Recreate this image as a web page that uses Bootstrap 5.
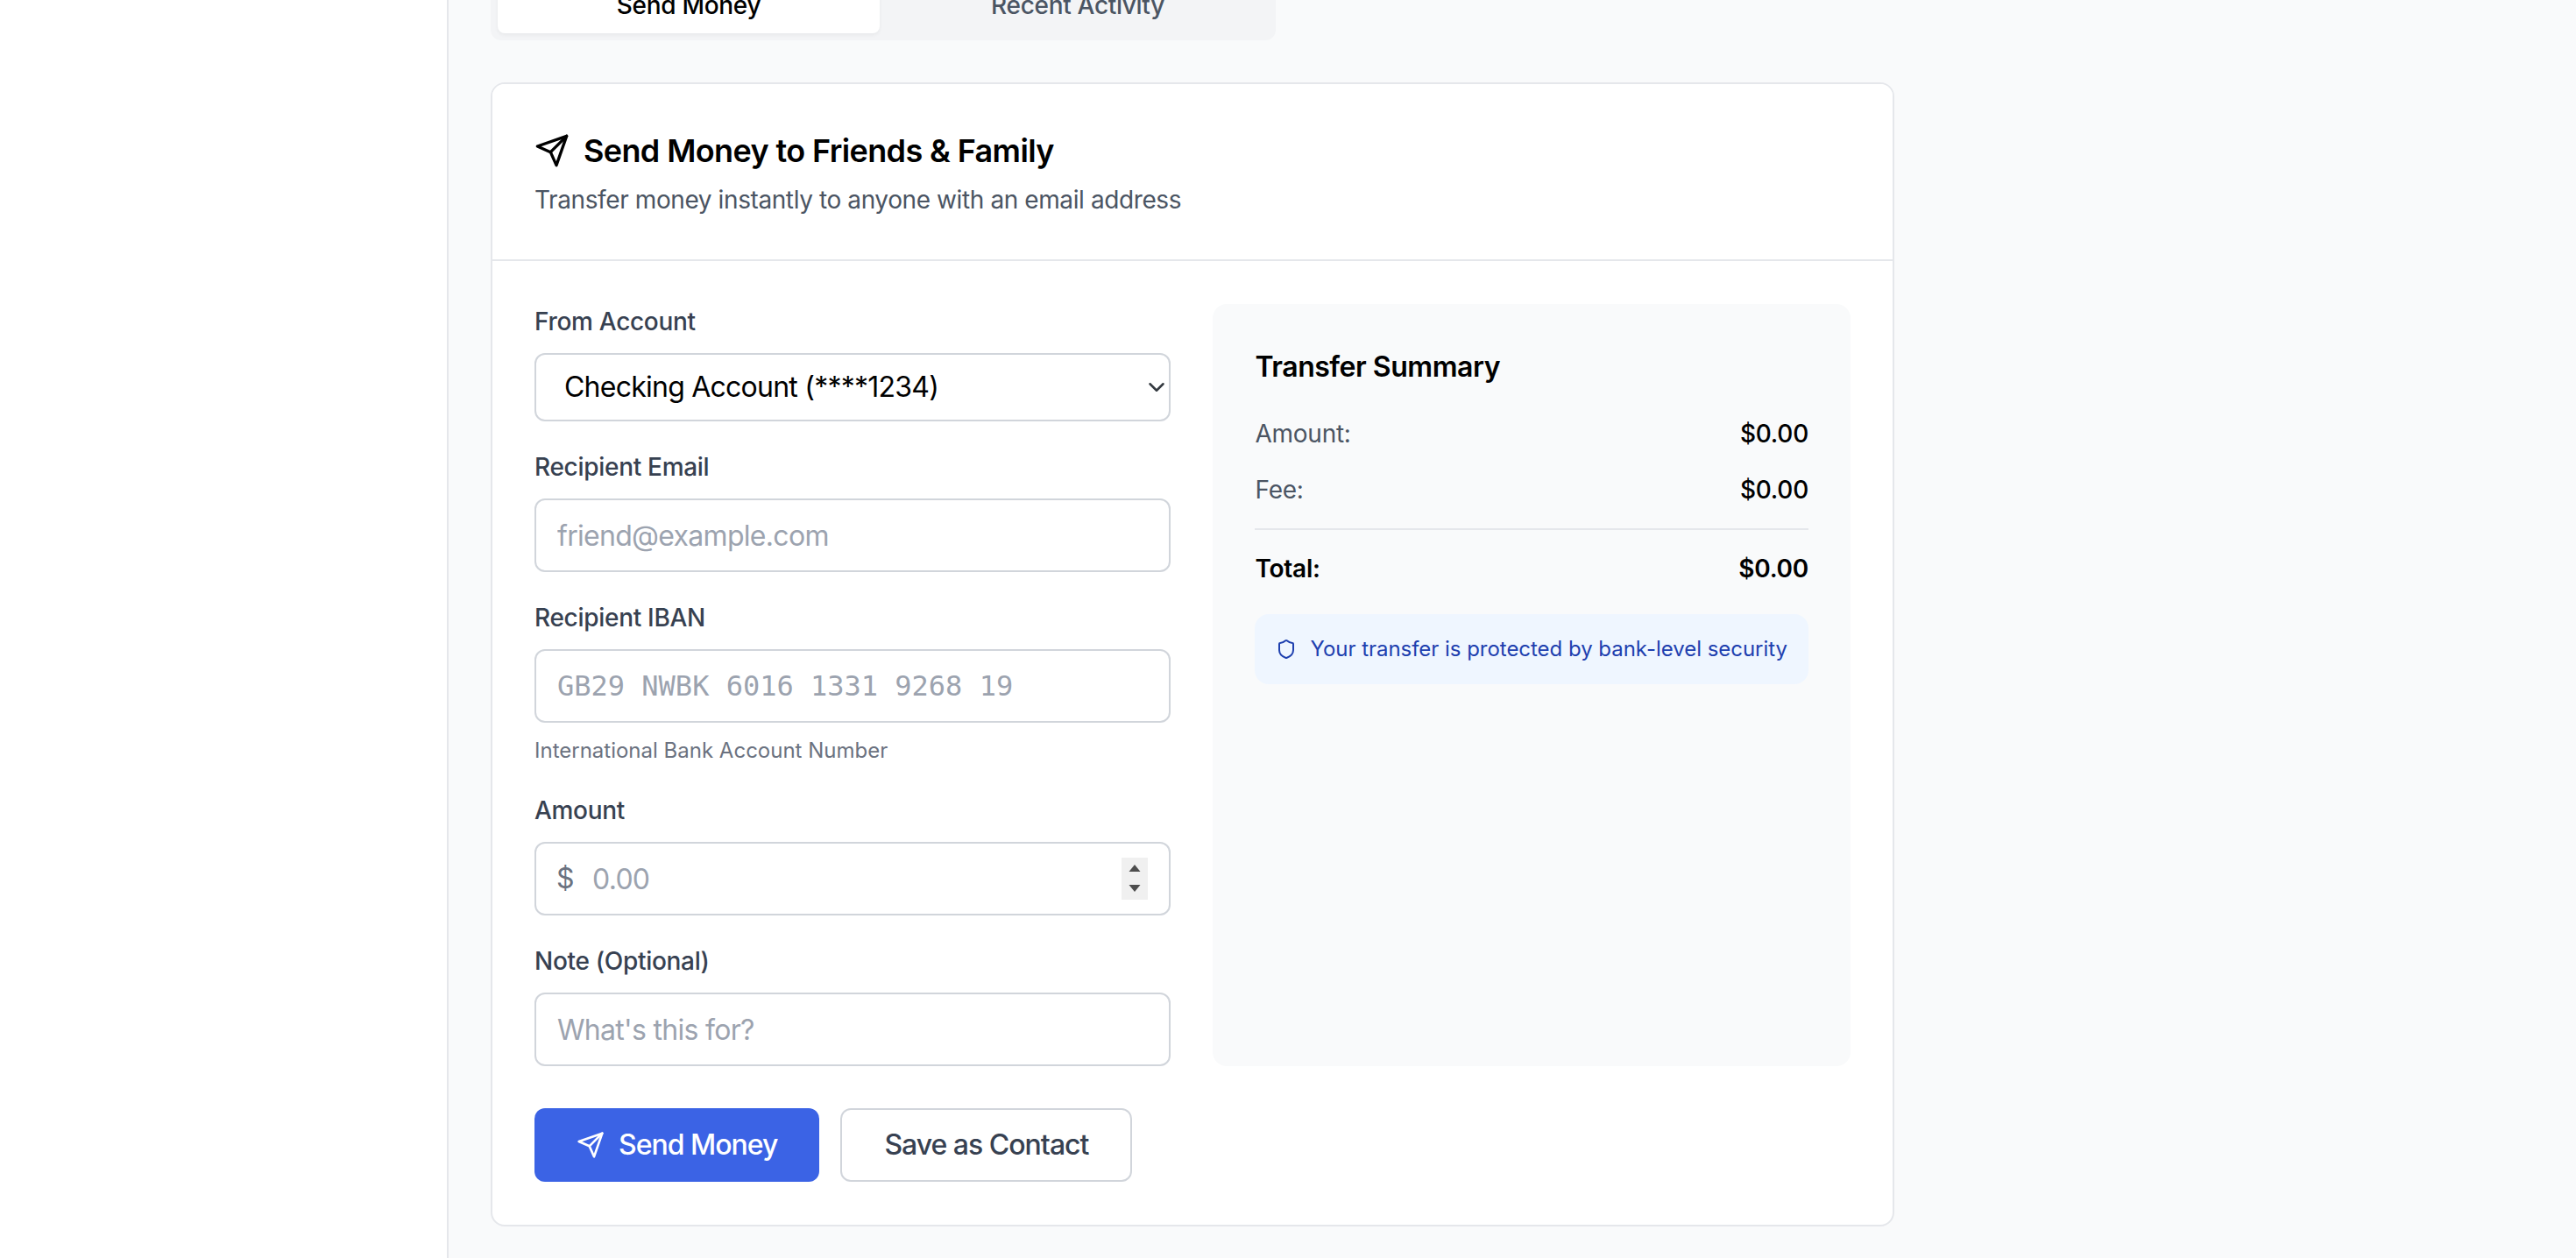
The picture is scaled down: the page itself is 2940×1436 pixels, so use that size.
<!DOCTYPE html>
<html lang="en">
<head>
    <meta charset="UTF-8">
    <meta name="viewport" content="width=device-width, initial-scale=1.0">
    <title>Send Money</title>
    <link href="https://cdn.jsdelivr.net/npm/bootstrap@5.3.0/dist/css/bootstrap.min.css" rel="stylesheet">
    <style>
        html, body { height: 100%; }
        body { background: #f9fafb; font-family: Inter, "Noto Sans", sans-serif; overflow: hidden; color: #000; }
        .side-rail { width: 512px; flex: none; background: #fff; border-right: 2px solid #e5e7eb; min-height: 100vh; }
        .main-pane { padding: 0 48px; flex: 1; }

        .tab-strip { width: 896px; height: 80px; margin-top: -34px; padding: 8px; background: #f3f4f6; border-radius: 12px; flex-wrap: nowrap; }
        .tab-strip .nav-link { height: 64px; padding: 0; font-size: 28px; font-weight: 500; letter-spacing: -.3px; color: #4b5563; border-radius: 8px; line-height: 64px; }
        .tab-strip .nav-item:first-child { margin-right: 8px; }
        .tab-strip .nav-link.active { background: #fff; color: #000; box-shadow: 0 2px 4px rgba(0,0,0,.05); }

        .send-card { width: 1602px; margin-top: 48px; border: 2px solid #e5e7eb; border-radius: 16px; background: #fff; }
        .send-card .card-header { padding: 48px; height: 202px; background: #fff; border-bottom: 2px solid #e5e7eb; border-radius: 14px 14px 0 0; }
        .send-card .card-body { padding: 49px 48px 49px; }
        .card-heading { font-size: 36px; line-height: 56px; font-weight: 600; letter-spacing: -.62px; margin: 0 0 8px; gap: 16px; }
        .card-sub { font-size: 28px; line-height: 40px; letter-spacing: -.4px; color: #4b5563; margin: 0; }

        .form-cols { display: grid; grid-template-columns: 1fr 1fr; column-gap: 48px; }
        .field-label { display: block; font-size: 28px; line-height: 40px; font-weight: 500; letter-spacing: -.3px; color: #374151; margin-bottom: 16px; }
        .field-wrap { margin-bottom: 32px; }
        .field-wrap.last-field { margin-bottom: 0; }
        .form-control.pay-input { height: 84px; padding: 0 24px; font-size: 32px; letter-spacing: -.7px; border: 2px solid #d1d5db; border-radius: 12px; color: #000; }
        .pay-input::placeholder { color: #9ca3af; opacity: 1; }
        .form-control.iban-input { font-family: "DejaVu Sans Mono", monospace; letter-spacing: 0; }
        .form-control.amount-input { padding-left: 64px; }
        .form-select.pay-select { height: 78px; padding: 0 24px 0 32px; font-size: 32px; letter-spacing: -.76px; border: 2px solid #d1d5db; border-radius: 12px; color: #000; background-size: 20px 20px; background-position: right 4px center; }
        .help-line { font-size: 24px; line-height: 32px; color: #6b7280; margin-top: 16px; }
        .dollar-mark { position: absolute; left: 25px; top: 0; line-height: 84px; font-size: 32px; color: #6b7280; }
        .spin-box { position: absolute; right: 26px; top: 18px; width: 30px; height: 48px; background: #f0f0f0; }

        .summary-panel { background: #f9fafb; border-radius: 16px; padding: 48px; }
        .summary-title { font-size: 32px; line-height: 48px; font-weight: 600; letter-spacing: -.47px; margin-bottom: 32px; }
        .sum-row { font-size: 28px; line-height: 40px; letter-spacing: -.25px; margin-bottom: 24px; color: #4b5563; }
        .sum-row b { font-weight: 500; color: #000; }
        .sum-total { border-top: 2px solid #e5e7eb; padding-top: 24px; margin-bottom: 32px; font-weight: 600; color: #000; }
        .sum-total b { font-weight: 600; }
        .secure-note { background: #eff6ff; color: #1e40af; border-radius: 16px; padding: 24px; font-size: 24px; line-height: 32px; letter-spacing: -.03px; gap: 15px; white-space: nowrap; }

        .action-row { margin-top: 48px; gap: 24px; }
        .btn.act-btn { height: 84px; padding: 0 48px; font-size: 32px; font-weight: 500; letter-spacing: -1px; border-radius: 12px; display: inline-flex; align-items: center; gap: 16px; }
        .btn.btn-primary.act-btn { background: #3b63e5; border: 0; color: #fff; }
        .btn.btn-outline-secondary.act-btn { background: #fff; border: 2px solid #d1d5db; color: #374151; }
    </style>
</head>
<body>
    <div class="d-flex">
        <aside class="side-rail"></aside>
        <main class="main-pane">
            <ul class="nav nav-pills nav-justified tab-strip">
                <li class="nav-item"><a class="nav-link active" href="#">Send Money</a></li>
                <li class="nav-item"><a class="nav-link" href="#">Recent Activity</a></li>
            </ul>

            <div class="card send-card">
                <div class="card-header">
                    <h2 class="card-heading d-flex align-items-center">
                        <svg width="40" height="40" viewBox="0 0 24 24" fill="none" stroke="#000" stroke-width="2" stroke-linecap="round" stroke-linejoin="round"><line x1="22" y1="2" x2="11" y2="13"/><polygon points="22 2 15 22 11 13 2 9 22 2"/></svg>
                        Send Money to Friends &amp; Family
                    </h2>
                    <p class="card-sub">Transfer money instantly to anyone with an email address</p>
                </div>
                <div class="card-body">
                    <div class="form-cols">
                        <form>
                            <div class="field-wrap">
                                <label class="field-label">From Account</label>
                                <select class="form-select pay-select">
                                    <option>Checking Account (****1234)</option>
                                    <option>Savings Account (****5678)</option>
                                </select>
                            </div>
                            <div class="field-wrap">
                                <label class="field-label">Recipient Email</label>
                                <input type="email" class="form-control pay-input" placeholder="friend@example.com">
                            </div>
                            <div class="field-wrap">
                                <label class="field-label">Recipient IBAN</label>
                                <input type="text" class="form-control pay-input iban-input" placeholder="GB29 NWBK 6016 1331 9268 19">
                                <div class="help-line">International Bank Account Number</div>
                            </div>
                            <div class="field-wrap">
                                <label class="field-label">Amount</label>
                                <div class="position-relative">
                                    <span class="dollar-mark">$</span>
                                    <input type="text" class="form-control pay-input amount-input" placeholder="0.00">
                                    <div class="spin-box">
                                        <svg width="30" height="48" viewBox="0 0 30 48" fill="#4d4d4d"><polygon points="15,8 21.5,16 8.5,16"/><polygon points="8.5,31 21.5,31 15,39"/></svg>
                                    </div>
                                </div>
                            </div>
                            <div class="field-wrap last-field">
                                <label class="field-label">Note (Optional)</label>
                                <input type="text" class="form-control pay-input" placeholder="What's this for?">
                            </div>
                        </form>

                        <div class="summary-panel">
                            <div class="summary-title">Transfer Summary</div>
                            <div class="sum-row d-flex justify-content-between"><span>Amount:</span><b>$0.00</b></div>
                            <div class="sum-row d-flex justify-content-between"><span>Fee:</span><b>$0.00</b></div>
                            <div class="sum-row sum-total d-flex justify-content-between"><span>Total:</span><b>$0.00</b></div>
                            <div class="secure-note d-flex align-items-center">
                                <svg width="24" height="24" viewBox="0 0 24 24" fill="none" stroke="#1e40af" stroke-width="2" stroke-linecap="round" stroke-linejoin="round"><path d="M20 13c0 5-3.5 7.5-7.66 8.95a1 1 0 0 1-.67-.01C7.5 20.5 4 18 4 13V6a1 1 0 0 1 1-1c2 0 4.5-1.2 6.24-2.72a1.17 1.17 0 0 1 1.52 0C14.51 3.81 17 5 19 5a1 1 0 0 1 1 1z"/></svg>
                                <span>Your transfer is protected by bank-level security</span>
                            </div>
                        </div>
                    </div>

                    <div class="d-flex action-row">
                        <button class="btn btn-primary act-btn">
                            <svg width="32" height="32" viewBox="0 0 24 24" fill="none" stroke="#fff" stroke-width="2" stroke-linecap="round" stroke-linejoin="round"><line x1="22" y1="2" x2="11" y2="13"/><polygon points="22 2 15 22 11 13 2 9 22 2"/></svg>
                            Send Money
                        </button>
                        <button class="btn btn-outline-secondary act-btn">Save as Contact</button>
                    </div>
                </div>
            </div>
        </main>
    </div>
    <script src="https://cdn.jsdelivr.net/npm/bootstrap@5.3.0/dist/js/bootstrap.bundle.min.js"></script>
</body>
</html>
